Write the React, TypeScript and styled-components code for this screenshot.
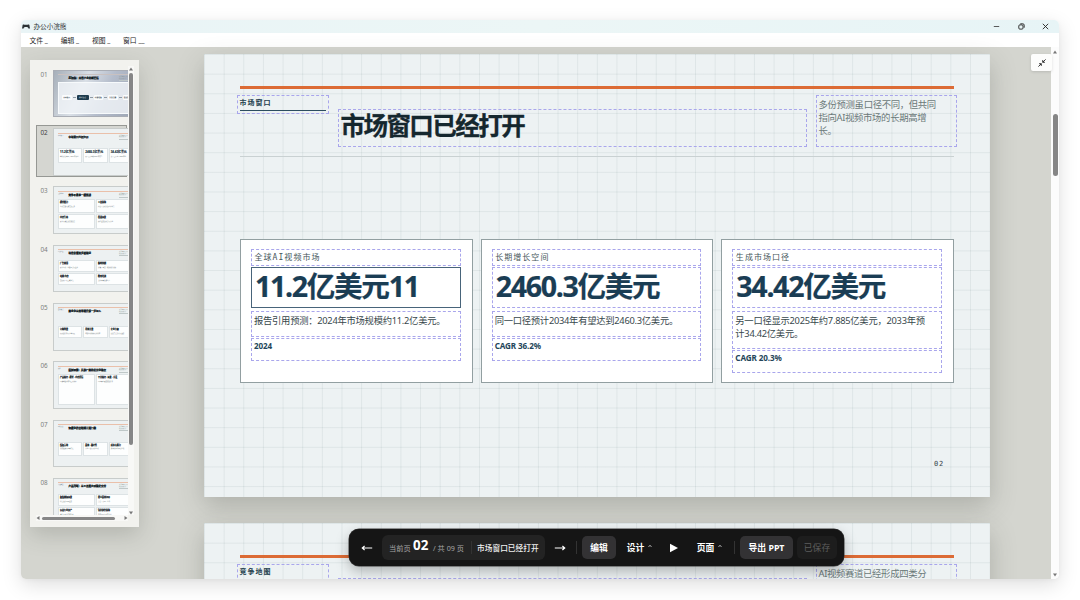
import React from "react";
import styled, { createGlobalStyle, css } from "styled-components";

const sans = `"Noto Sans", "Noto Sans CJK SC", sans-serif`;
const mono = `"DejaVu Sans Mono", "Noto Sans CJK SC", monospace`;

const GlobalStyle = createGlobalStyle`
  * { box-sizing: border-box; }
  body { margin: 0; background: #fff; font-family: ${sans}; overflow: hidden; }
`;

const Page = styled.div`
  width: 1080px;
  height: 600px;
  padding: 20px 21px 21px;
  overflow: hidden;
`;

const Window = styled.div`
  display: flex;
  flex-direction: column;
  height: 559px;
  border-radius: 5px;
  overflow: hidden;
  background: #fff;
  box-shadow: 0 6px 20px rgba(0, 0, 0, 0.13), 0 1px 4px rgba(0, 0, 0, 0.04);
  position: relative;
`;

const TitleBar = styled.header`
  display: flex;
  align-items: center;
  height: 13px;
  flex: none;
  padding: 0 10px 0 1px;
  background: linear-gradient(90deg, #e9f4f6, #ecf6f6 50%, #e7f4f6);
`;

const AppName = styled.span`
  flex: 1;
  margin-left: 3.5px;
  font-size: 6.6px;
  line-height: 13px;
  color: #2a2f31;
`;

const WindowControls = styled.div`
  display: flex;
  align-items: center;
  gap: 17.5px;
  svg { display: block; }
`;

const MenuBar = styled.nav`
  display: flex;
  gap: 12px;
  height: 14px;
  flex: none;
  padding: 0 8.5px;
  background: #fff;
`;

const MenuItem = styled.span`
  width: 19.2px;
  font-size: 6.8px;
  line-height: 15px;
  color: #222;
  white-space: nowrap;
`;

const Body = styled.div`
  display: flex;
  flex: 1;
  min-height: 0;
`;

const Desk = styled.main`
  display: flex;
  align-items: flex-start;
  width: 1030px;
  background: #d4d5cf;
`;

const PanelSlot = styled.div`
  width: 183px;
  flex: none;
  padding: 13px 0 0 9px;
`;

const Panel = styled.aside`
  display: grid;
  grid-template-columns: 92px 6px;
  grid-template-rows: 449px 6px;
  width: 109px;
  height: 467px;
  padding: 6px 5px 6px 6px;
  background: #f2f2ee;
  box-shadow: 0 8px 20px rgba(70, 75, 65, 0.22);
`;

const ThumbList = styled.div`
  display: flex;
  flex-direction: column;
  gap: 5.95px;
  padding-top: 0.6px;
  overflow: hidden;
`;

const ThumbItem = styled.div<{ $active?: boolean }>`
  display: flex;
  flex: none;
  gap: 4.5px;
  width: 91px;
  height: 52.4px;
  padding: 2.2px 0 0 3.5px;
  border: 1px solid ${(p) => (p.$active ? "#969894" : "transparent")};
  background: ${(p) => (p.$active ? "#d5d6d1" : "transparent")};
`;

const ThumbNumber = styled.span<{ $active?: boolean }>`
  width: 8px;
  flex: none;
  font: 6.3px/10px ${sans};
  color: ${(p) => (p.$active ? "#3d403f" : "#7c7f7d")};
`;

const Thumb = styled.div<{ $cover?: boolean }>`
  width: 85px;
  height: 47.5px;
  flex: none;
  padding: 3.4px 4px 0;
  border: 1px solid #c8cccb;
  overflow: hidden;
  background: #edf1f2;
  ${(p) =>
    p.$cover &&
    css`
      border-color: #a9adb5;
      background: linear-gradient(115deg, #a6afb9, #d9dfe6 35%, #b4bccb 60%, #9aa3b1);
    `}
`;

const ThumbRule = styled.div<{ $cover?: boolean }>`
  height: 1px;
  background: ${(p) => (p.$cover ? "#c9c1c0" : "#eac0aa")};
`;

const ThumbHead = styled.div`
  display: flex;
  height: 7px;
  font-family: ${sans};
`;

const ThumbTag = styled.span`
  width: 10.5px;
  font-size: 1.3px;
  line-height: 3px;
  color: #5b6e7a;
  white-space: nowrap;
`;

const ThumbTitle = styled.span`
  width: 51px;
  font-size: 2.5px;
  font-weight: 900;
  line-height: 7px;
  color: #0c161b;
  -webkit-text-stroke: 0.2px #0c161b;
  white-space: nowrap;
`;

const ThumbNote = styled.span`
  width: 14px;
  height: 5px;
  margin-top: 1px;
  font-size: 1.4px;
  line-height: 1.6px;
  color: #84918f;
  border-bottom: 0.5px solid #bfc8c8;
`;

const ThumbGrid = styled.div<{ $cols: number; $top: number }>`
  display: grid;
  grid-template-columns: repeat(${(p) => p.$cols}, 1fr);
  gap: 1px;
  margin-top: ${(p) => p.$top}px;
`;

const ThumbCard = styled.div<{ $h: number }>`
  height: ${(p) => p.$h}px;
  padding: 2px 1px;
  overflow: hidden;
  background: #fdfefe;
  border: 0.5px solid #dde3e5;
  font-size: 1.5px;
  line-height: 2px;
  color: #6a7577;
  white-space: nowrap;
  b {
    display: block;
    font-size: 2px;
    line-height: 2.8px;
    color: #121d24;
    -webkit-text-stroke: 0.15px #121d24;
  }
`;

const BigNumber = styled.b`
  && { font-size: 2.9px; line-height: 3.6px; color: #1d3c52; }
`;

const Flow = styled.div`
  display: flex;
  align-items: center;
  height: 32px;
  padding: 0 3px 2px;
  background: rgba(240, 244, 248, 0.82);
  border: 0.5px solid #f7fafc;
`;

const FlowNode = styled.div<{ $on?: boolean }>`
  width: ${(p) => (p.$on ? 12 : 9.5)}px;
  height: 5px;
  flex: none;
  border-radius: 1px;
  font-size: 1.7px;
  line-height: 5px;
  font-weight: 700;
  text-align: center;
  color: ${(p) => (p.$on ? "#9fb2bf" : "#3f4b54")};
  background: ${(p) => (p.$on ? "#1f3c4e" : "#fafcfd")};
`;

const FlowLink = styled.i`
  width: 3px;
  height: 0.6px;
  margin: 0 1px;
  flex: none;
  background: #8f9ba5;
`;

const TrackV = styled.div`
  display: flex;
  flex-direction: column;
  align-items: center;
  padding-top: 1px;
  background: #f8f8f6;
`;

const TrackH = styled.div`
  display: flex;
  align-items: center;
  background: #f8f8f6;
`;

const PageTrack = styled.div`
  display: flex;
  flex-direction: column;
  align-items: center;
  width: 8px;
  padding: 3px 0 2px;
  background: #fcfcfc;
`;

const Bar = styled.i<{ $w: number; $h: number; $gap?: string }>`
  display: block;
  flex: none;
  width: ${(p) => p.$w}px;
  height: ${(p) => p.$h}px;
  border-radius: 2.5px;
  background: #868686;
  margin: ${(p) => p.$gap ?? 0};
`;

const Caret = styled.svg`
  display: block;
  flex: none;
  fill: #777;
`;

const Spacer = styled.span`
  flex: 1;
`;

const Slides = styled.div`
  display: flex;
  flex-direction: column;
  gap: 26px;
  width: 786px;
  height: 532px;
  padding-top: 7px;
`;

const Slide = styled.section`
  display: flex;
  flex-direction: column;
  flex: none;
  width: 786px;
  height: 443px;
  padding: 32px 36px 0;
  background-color: #edf2f3;
  background-image: linear-gradient(90deg, rgba(40, 75, 80, 0.075) 1px, transparent 1px),
    linear-gradient(rgba(40, 75, 80, 0.075) 1px, transparent 1px);
  background-size: 19.65px 19.65px;
  box-shadow: 0 9px 24px rgba(65, 70, 62, 0.26);
`;

const Rule = styled.div`
  flex: none;
  height: 3px;
  background: #dc6b35;
`;

const dashed = css`
  border: 1px dashed #a9a6ec;
`;

const SlideHead = styled.div`
  display: flex;
  gap: 9px;
  flex: none;
  height: 52px;
  margin: 6px -3px 0;
`;

const Kicker = styled.div`
  ${dashed}
  width: 92px;
  height: 19px;
  padding: 2px 2px 0;
  span {
    display: block;
    height: 13px;
    border-bottom: 1px solid #2d4d60;
    font: 700 7px/10px ${mono};
    letter-spacing: 1px;
    text-indent: -0.5px;
    color: #243f4e;
  }
`;

const Title = styled.h1`
  ${dashed}
  align-self: flex-end;
  width: 469px;
  height: 38px;
  margin: 0;
  padding-left: 1.5px;
  font: 700 24.5px/32px ${sans};
  letter-spacing: -1.55px;
  color: #15272e;
  -webkit-text-stroke: 0.3px #15272e;
`;

const Note = styled.p`
  ${dashed}
  width: 141px;
  height: 52px;
  margin: 0;
  padding: 2px 18px 0 1.5px;
  font: 9.4px/13.2px ${sans};
  letter-spacing: -0.35px;
  color: #6b7979;
`;

const Hairline = styled.div`
  flex: none;
  height: 1px;
  margin-top: 8.5px;
  background: #c9d1d2;
`;

const Cards = styled.div`
  display: grid;
  grid-template-columns: repeat(3, 1fr);
  gap: 8px;
  flex: none;
  height: 144px;
  margin-top: 82.5px;
`;

const Card = styled.article`
  display: flex;
  flex-direction: column;
  padding: 9px 11px 0 10px;
  background: #fff;
  border: 1px solid #929fa1;
`;

const CardLabel = styled.div`
  ${dashed}
  height: 17px;
  padding-left: 2.5px;
  font: 8px/15px ${mono};
  letter-spacing: 1.05px;
  color: #46565a;
  white-space: nowrap;
`;

const CardValue = styled.div<{ $selected?: boolean }>`
  ${dashed}
  ${(p) => p.$selected && "border: 1px solid #48647a;"}
  height: 41px;
  margin-top: 1px;
  padding-left: 3px;
  font: 700 28.6px/35px ${sans};
  letter-spacing: -1.32px;
  color: #1a3d54;
  -webkit-text-stroke: 0.2px #1a3d54;
  white-space: nowrap;
`;

const CardText = styled.div<{ $tall?: boolean }>`
  ${dashed}
  height: ${(p) => (p.$tall ? 38 : 26)}px;
  margin-top: 3px;
  padding: 2px 0 0 2px;
  font: 9.3px/13px ${sans};
  letter-spacing: -0.26px;
  color: #37474c;
  white-space: nowrap;
`;

const CardFoot = styled.div`
  ${dashed}
  height: 23px;
  margin-top: 1px;
  padding: 0.5px 0 0 2px;
  font: 700 8.1px/11px ${sans};
  letter-spacing: -0.1px;
  color: #24465a;
`;

const PageNumber = styled.div`
  margin: 75.5px 10px 0 auto;
  font: 7px/10px ${mono};
  letter-spacing: 0.8px;
  color: #36454a;
`;

const Collapse = styled.button`
  position: absolute;
  left: 1010px;
  top: 34px;
  display: grid;
  place-items: center;
  width: 21px;
  height: 17px;
  padding: 0;
  border: 0;
  border-radius: 2px;
  background: #fdfdfc;
  box-shadow: 0 1px 3px rgba(0, 0, 0, 0.13);
`;

const Toolbar = styled.div`
  position: absolute;
  left: 328px;
  top: 509px;
  display: flex;
  align-items: center;
  width: 495px;
  height: 37px;
  padding: 0 7px 0 12px;
  border-radius: 10px;
  background: #151515;
  box-shadow: 0 0 0 0.5px #3a3a3a, 0 5px 14px rgba(0, 0, 0, 0.28);
  color: #fff;
  svg { display: block; flex: none; }
`;

const Location = styled.div`
  display: flex;
  flex: none;
  align-items: center;
  width: 163px;
  height: 25px;
  margin: 0 9px;
  padding-left: 7px;
  border-radius: 6px;
  background: #232323;
  font-size: 7.2px;
  color: #a6a6a6;
  white-space: nowrap;
`;

const Current = styled.strong`
  width: 20px;
  margin: -5px 0 0 2.5px;
  font-size: 13.4px;
  line-height: 20px;
  letter-spacing: -0.1px;
  color: #fff;
`;

const Total = styled.span`
  width: 32px;
`;

const Divider = styled.i<{ $gap: string }>`
  width: 1px;
  height: 13px;
  flex: none;
  margin: ${(p) => p.$gap};
  background: #333;
`;

const Here = styled.span`
  font-size: 7.7px;
  font-weight: 500;
  margin-top: -1px;
  color: #f0f0f0;
`;

const ToolButton = styled.button<{ $w: number; $kind?: "fill" | "dim" }>`
  display: flex;
  align-items: center;
  justify-content: center;
  gap: 4px;
  flex: none;
  width: ${(p) => p.$w}px;
  height: 23px;
  margin-left: ${(p) => (p.$kind === "dim" ? 4 : 0)}px;
  padding: 0;
  border: 0;
  border-radius: 5px;
  font-family: ${sans};
  font-size: 8.8px;
  line-height: 12px;
  font-weight: ${(p) => (p.$kind === "dim" ? 400 : 700)};
  white-space: nowrap;
  color: ${(p) => (p.$kind === "dim" ? "#5d5d5d" : "#fff")};
  background: ${(p) => (p.$kind === "fill" ? "#333234" : p.$kind === "dim" ? "#1d1d1d" : "transparent")};
`;

const Up = () => <Caret width="4" height="4" viewBox="0 0 4 4"><path d="M0 3.5 2 .5l2 3z" /></Caret>;
const Down = () => <Caret width="4" height="4" viewBox="0 0 4 4"><path d="M0 .5h4L2 3.5z" /></Caret>;
const Left = () => <Caret width="4" height="4" viewBox="0 0 4 4"><path d="M3.5 0v4L.5 2z" /></Caret>;
const Right = () => <Caret width="4" height="4" viewBox="0 0 4 4"><path d="M.5 0v4l3-2z" /></Caret>;

const Arrow = ({ back }: { back?: boolean }) => (
  <svg width="12" height="8" viewBox="0 0 12 8" fill="none" stroke="#fff" strokeWidth="1.2">
    <path d={back ? "M11.2 4H1.2M3.6 2 1.3 4l2.3 2" : "M.8 4h10M8.4 2 10.7 4 8.4 6"} />
  </svg>
);

const Chevron = () => (
  <svg width="4" height="7" viewBox="0 0 4 7" fill="none" stroke="#ccc" strokeWidth=".8">
    <path d="M.5 3 2 1.2 3.5 3" />
  </svg>
);

type ThumbData = {
  title: string;
  tag: string;
  cols: number;
  top: number;
  h: number;
  cards: [string, string][];
  numbers?: boolean;
};

const thumbs: ThumbData[] = [
  { title: "AI视频：内容产业的新供给", tag: "", cols: 0, top: 0, h: 0, cards: [] },
  {
    title: "市场窗口已经打开", tag: "市场窗口", cols: 3, top: 7.5, h: 15, numbers: true,
    cards: [["11.2亿美元", "报告引用预测：2024年市场"], ["2460.3亿美元", "同一口径预计2034年有望"], ["34.42亿美元", "另一口径显示2025年约"]],
  },
  {
    title: "竞争不是单一模型战", tag: "竞争地图", cols: 2, top: 0, h: 14.5,
    cards: [["模型能力", "生成质量与速度的竞争"], ["工具体验", "从提示到成片的流程整合"], ["内容生态", "素材与模板的持续供给"], ["渠道场景", "贴近业务的分发与交付"]],
  },
  {
    title: "场景价值逐步被验证", tag: "应用场景", cols: 2, top: 3, h: 12,
    cards: [["广告营销", "素材生成、批量测试与投放"], ["影视短剧", "分镜、预演、特效制作辅助"], ["电商 内容", "商品展示与口播视频"], ["教育培训", "课程内容快速生产"]],
  },
  {
    title: "商业化从效率提升第一步切入", tag: "商业模式", cols: 3, top: 10.5, h: 12,
    cards: [["订阅收费", "面向创作者与小型团队"], ["用量计费", "按照生成时长与分辨率"], ["企业方案", "提供专属部署与服务"]],
  },
  {
    title: "案例观察：头部厂商的差异化路径", tag: "案例", cols: 2, top: 0, h: 31,
    cards: [["产品路径 · 模型 · 内容供给", "以模型能力带动工具体验"], ["平台路径 · 场景 · 分发", "以内容场景连接创作者"]],
  },
  {
    title: "规模化仍需跨越三道门槛", tag: "风险边界", cols: 3, top: 9.5, h: 14,
    cards: [["版权合规", "训练数据与内容归属"], ["质量 · 稳定性", "人物一致与可控生成"], ["成本与算力", "推理成本仍需要优化"]],
  },
  {
    title: "产品判断：从工具能力到稳定交付", tag: "产品建议", cols: 2, top: 4, h: 12,
    cards: [["聚焦高频场景", "优先选择刚需业务"], ["建立质量闭环", "反馈、评测、迭代"], ["沉淀行业资产", "模板与素材持续积累"], ["强化协作体验", "连接团队与现有流程"]],
  },
];

const flowNodes = ["文本输入", "模型生成", "内容编辑", "分发运营", "商业转化"];

function Thumbnail({ data, index }: { data: ThumbData; index: number }) {
  const cover = index === 0;
  return (
    <ThumbItem $active={index === 1}>
      <ThumbNumber $active={index === 1}>0{index + 1}</ThumbNumber>
      <Thumb $cover={cover}>
        <ThumbRule $cover={cover} />
        <ThumbHead>
          <ThumbTag>{data.tag}</ThumbTag>
          <ThumbTitle>{data.title}</ThumbTitle>
          <ThumbNote>多份预测口径不同但共同指向增长</ThumbNote>
        </ThumbHead>
        {cover ? (
          <Flow>
            {flowNodes.map((n, i) => (
              <React.Fragment key={n}>
                {i > 0 && <FlowLink />}
                <FlowNode $on={i === 1}>{n}</FlowNode>
              </React.Fragment>
            ))}
          </Flow>
        ) : (
          <ThumbGrid $cols={data.cols} $top={data.top}>
            {data.cards.map(([head, text]) => (
              <ThumbCard key={head} $h={data.h}>
                {data.numbers ? <BigNumber>{head}</BigNumber> : <b>{head}</b>}
                {text}
              </ThumbCard>
            ))}
          </ThumbGrid>
        )}
      </Thumb>
    </ThumbItem>
  );
}

const stats = [
  { label: "全球AI视频市场", value: "11.2亿美元11", lines: ["报告引用预测：2024年市场规模约11.2亿美元。"], foot: "2024" },
  { label: "长期增长空间", value: "2460.3亿美元", lines: ["同一口径预计2034年有望达到2460.3亿美元。"], foot: "CAGR 36.2%" },
  { label: "生成市场口径", value: "34.42亿美元", lines: ["另一口径显示2025年约7.885亿美元，2033年预", "计34.42亿美元。"], foot: "CAGR 20.3%" },
];

export default function App() {
  return (
    <Page>
      <GlobalStyle />
      <Window>
        <TitleBar>
          <svg width="8" height="7" viewBox="0 0 8 7">
            <path d="M.5 2.8C.3 1.4 1.7 1 2.4 1.8h3.2C6.3 1 7.7 1.4 7.5 2.8L8 5.4H6.4C6.2 4.4 5.4 4 4 4S1.8 4.4 1.6 5.4H0z" fill="#2b3034" />
          </svg>
          <AppName>办公小浣熊</AppName>
          <WindowControls>
            <svg width="7" height="7" viewBox="0 0 7 7" stroke="#333"><path d="M.8 3.5h5.4" strokeWidth=".8" /></svg>
            <svg width="7" height="7" viewBox="0 0 7 7" fill="none" stroke="#222" strokeWidth=".9">
              <rect x=".8" y="1.9" width="4.2" height="4.2" rx="1" />
              <path d="M2.3.8h2.5A1.4 1.4 0 0 1 6.2 2.2v2.5" />
            </svg>
            <svg width="7" height="7" viewBox="0 0 7 7" stroke="#222" strokeWidth=".9"><path d="m.8.8 5.4 5.4M6.2.8.8 6.2" /></svg>
          </WindowControls>
        </TitleBar>
        <MenuBar>
          <MenuItem>文件 _</MenuItem>
          <MenuItem>编辑 _</MenuItem>
          <MenuItem>视图 _</MenuItem>
          <MenuItem>窗口 __</MenuItem>
        </MenuBar>
        <Body>
          <Desk>
            <PanelSlot>
              <Panel>
                <ThumbList>
                  {thumbs.map((t, i) => <Thumbnail key={t.title} data={t} index={i} />)}
                </ThumbList>
                <TrackV>
                  <Up />
                  <Bar $w={4} $h={372} $gap="2px 0 0" />
                  <Spacer />
                  <Down />
                </TrackV>
                <TrackH>
                  <Left />
                  <Bar $w={73} $h={3} $gap="0 0 0 1.5px" />
                  <Spacer />
                  <Right />
                </TrackH>
              </Panel>
            </PanelSlot>
            <Slides>
              <Slide>
                <Rule />
                <SlideHead>
                  <Kicker><span>市场窗口</span></Kicker>
                  <Title>市场窗口已经打开</Title>
                  <Note>多份预测虽口径不同，但共同指向AI视频市场的长期高增长。</Note>
                </SlideHead>
                <Hairline />
                <Cards>
                  {stats.map((s, i) => (
                    <Card key={s.label}>
                      <CardLabel>{s.label}</CardLabel>
                      <CardValue $selected={i === 0}>{s.value}</CardValue>
                      <CardText $tall={s.lines.length > 1}>
                        {s.lines.map((l) => <div key={l}>{l}</div>)}
                      </CardText>
                      <CardFoot>{s.foot}</CardFoot>
                    </Card>
                  ))}
                </Cards>
                <PageNumber>02</PageNumber>
              </Slide>
              <Slide>
                <Rule />
                <SlideHead>
                  <Kicker><span>竞争地图</span></Kicker>
                  <Title />
                  <Note>AI视频赛道已经形成四类分</Note>
                </SlideHead>
              </Slide>
            </Slides>
          </Desk>
          <PageTrack>
            <Up />
            <Bar $w={5} $h={62} $gap="60px 0 0" />
            <Spacer />
            <Down />
          </PageTrack>
        </Body>
        <Collapse aria-label="收起">
          <svg width="8" height="8" viewBox="0 0 8 8" fill="none" stroke="#222" strokeWidth=".9">
            <path d="M7.6.4 4.8 3.2M4.7 1.1v2.2h2.2M.4 7.6l2.8-2.8M1.1 4.7h2.2v2.2" />
          </svg>
        </Collapse>
        <Toolbar>
          <Arrow back />
          <Location>
            当前页<Current>02</Current>
            <Total>/ 共 09 页</Total>
            <Divider $gap="0 5px 0 6px" />
            <Here>市场窗口已经打开</Here>
          </Location>
          <Arrow />
          <Divider $gap="0 5px 0 10px" />
          <ToolButton $w={34} $kind="fill">编辑</ToolButton>
          <ToolButton $w={47}>设计<Chevron /></ToolButton>
          <ToolButton $w={22}>
            <svg width="8" height="10" viewBox="0 0 8 10"><path d="M0 .8 8 5 0 9.2z" fill="#fff" /></svg>
          </ToolButton>
          <ToolButton $w={49}>页面<Chevron /></ToolButton>
          <Spacer />
          <Divider $gap="0 5px 0 0" />
          <ToolButton $w={53} $kind="fill">导出 PPT</ToolButton>
          <ToolButton $w={40} $kind="dim">已保存</ToolButton>
        </Toolbar>
      </Window>
    </Page>
  );
}
